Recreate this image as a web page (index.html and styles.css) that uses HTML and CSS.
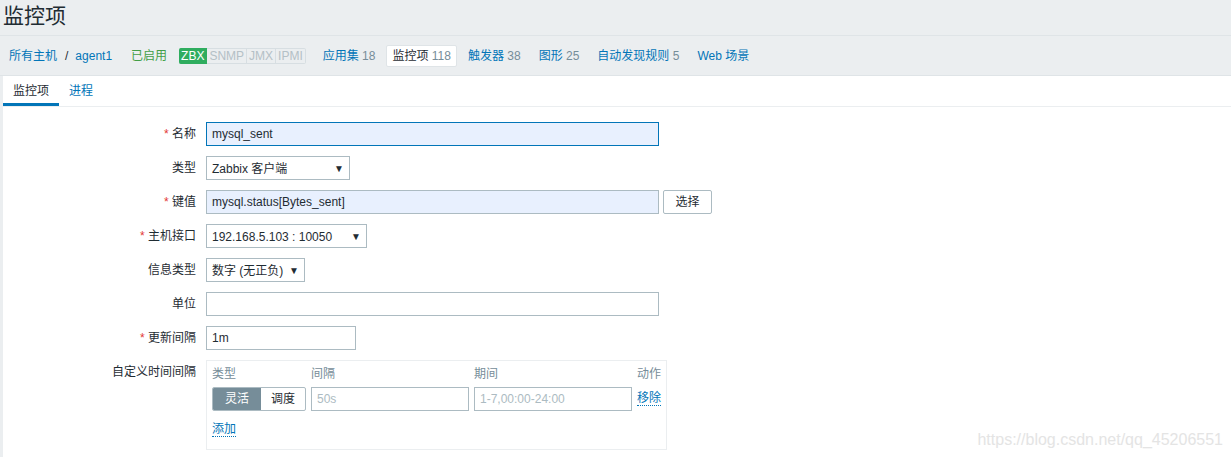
FILE: index.html
```html
<!DOCTYPE html>
<html lang="zh">
<head>
<meta charset="utf-8">
<title>监控项</title>
<link rel="stylesheet" href="styles.css">
</head>
<body>
<header class="page-header">
  <h1 class="page-title">监控项</h1>
</header>
<nav class="host-nav">
  <a class="link crumb">所有主机</a>
  <span class="sep">/</span>
  <a class="link crumb">agent1</a>
  <span class="status-on">已启用</span>
  <span class="badges">
    <span class="badge badge-on">ZBX</span><span class="badge">SNMP</span><span class="badge">JMX</span><span class="badge">IPMI</span>
  </span>
  <a class="nav-item link">应用集 <span class="count">18</span></a>
  <span class="nav-item current">监控项 <span class="count">118</span></span>
  <a class="nav-item link">触发器 <span class="count">38</span></a>
  <a class="nav-item link">图形 <span class="count">25</span></a>
  <a class="nav-item link">自动发现规则 <span class="count">5</span></a>
  <a class="nav-item link">Web 场景</a>
</nav>
<main class="content">
  <div class="tabs">
    <span class="tab tab-active">监控项</span>
    <a class="tab link">进程</a>
  </div>
  <div class="form">
    <div class="row">
      <label class="lbl"><span class="req">*</span> 名称</label>
      <div class="field"><div class="input wide focused autofill">mysql_sent</div></div>
    </div>
    <div class="row">
      <label class="lbl">类型</label>
      <div class="field"><div class="select sel-type"><span>Zabbix 客户端</span><span class="arrow">▼</span></div></div>
    </div>
    <div class="row">
      <label class="lbl"><span class="req">*</span> 键值</label>
      <div class="field"><div class="input wide autofill">mysql.status[Bytes_sent]</div><button class="btn">选择</button></div>
    </div>
    <div class="row">
      <label class="lbl"><span class="req">*</span> 主机接口</label>
      <div class="field"><div class="select sel-iface"><span>192.168.5.103 : 10050</span><span class="arrow">▼</span></div></div>
    </div>
    <div class="row">
      <label class="lbl">信息类型</label>
      <div class="field"><div class="select sel-info"><span>数字 (无正负)</span><span class="arrow">▼</span></div></div>
    </div>
    <div class="row">
      <label class="lbl">单位</label>
      <div class="field"><div class="input wide"></div></div>
    </div>
    <div class="row">
      <label class="lbl"><span class="req">*</span> 更新间隔</label>
      <div class="field"><div class="input short">1m</div></div>
    </div>
    <div class="row">
      <label class="lbl">自定义时间间隔</label>
      <div class="field">
        <div class="interval-box">
          <div class="iv-grid">
            <span class="th">类型</span>
            <span class="th">间隔</span>
            <span class="th">期间</span>
            <span class="th">动作</span>
            <div class="toggle"><span class="tg tg-on">灵活</span><span class="tg">调度</span></div>
            <div class="input ph">50s</div>
            <div class="input ph">1-7,00:00-24:00</div>
            <a class="dlink">移除</a>
          </div>
          <a class="dlink add">添加</a>
        </div>
      </div>
    </div>
  </div>
  <div class="watermark">https://blog.csdn.net/qq_45206551</div>
</main>
</body>
</html>
```

FILE: styles.css
```css
* { box-sizing: border-box; }
html, body { margin: 0; padding: 0; }
body {
  background: #ebeef0;
  color: #1f2c33;
  font-family: "Liberation Sans", Arial, "Noto Sans CJK SC", sans-serif;
  font-size: 12px;
  line-height: 14px;
  height: 457px;
  overflow: hidden;
}
.link { color: #0275b8; text-decoration: none; }

.page-header {
  height: 36px;
  border-bottom: 1px solid #dfe4e7;
  padding: 4px 0 0 3px;
}
.page-title {
  margin: 0;
  font-size: 21px;
  line-height: 24px;
  font-weight: normal;
  color: #1f2c33;
}

.host-nav {
  height: 40px;
  display: flex;
  align-items: center;
  padding-left: 9px;
  border-bottom: 1px solid #dfe4e7;
  white-space: nowrap;
}
.sep { margin: 0 7px 0 8px; color: #1f2c33; }
.status-on { color: #429e47; margin-left: 19px; }
.badges { display: inline-flex; margin-left: 12px; margin-right: 17px; }
.badge {
  height: 16px;
  line-height: 14px;
  padding: 0 2px;
  border: 1px solid #d7dee2;
  border-left: none;
  color: #b4c0c6;
  font-size: 12px;
  background: #ebeef0;
}
.badge-on {
  background: #2fad5f;
  border-color: #2fad5f;
  color: #ffffff;
  padding: 0 2px;
  border-radius: 2px 0 0 2px;
}
.badge:last-child { border-radius: 0 2px 2px 0; }
.nav-item {
  display: inline-block;
  padding: 4px 7px;
}
.host-nav .nav-item + .nav-item { margin-left: 4px; }
.host-nav .badges + .nav-item { padding-left: 0; }
.count { color: #768d99; }
.current {
  background: #ffffff;
  border: 1px solid #dfe4e7;
  border-radius: 2px;
  height: 22px;
  line-height: 14px;
  padding: 3px 5px;
}

.content {
  position: relative;
  margin-left: 3px;
  background: #ffffff;
  height: 381px;
}
.tabs {
  height: 31px;
  display: flex;
  border-bottom: 1px solid #ebeef0;
}
.tab {
  padding: 8px 10px 0 10px;
  height: 30px;
  color: #0275b8;
}
.tab-active {
  color: #1f2c33;
  border-bottom: 3px solid #0275b8;
}

.form { padding-top: 15px; }
.row {
  display: grid;
  grid-template-columns: 193px 1fr;
  column-gap: 10px;
  margin-bottom: 10px;
}
.lbl {
  text-align: right;
  padding-top: 5px;
  line-height: 14px;
}
.req { color: #e33734; }
.field { display: flex; gap: 4px; align-items: flex-start; }

.input {
  height: 24px;
  border: 1px solid #acbbc2;
  background: #ffffff;
  padding: 4px 5px;
  line-height: 14px;
  color: #1f2c33;
  white-space: nowrap;
  overflow: hidden;
}
.wide { width: 453px; }
.short { width: 150px; }
.autofill { background: #e8f0fe; }
.focused { border-color: #0275b8; }
.ph { color: #acbbc2; }

.select {
  height: 24px;
  border: 1px solid #acbbc2;
  background: #ffffff;
  padding: 5px 5px 3px 5px;
  display: flex;
  justify-content: space-between;
  line-height: 14px;
  white-space: nowrap;
}
.arrow { font-size: 10px; color: #1f2c33; }
.sel-type { width: 144px; }
.sel-iface { width: 161px; }
.sel-info { width: 99px; }

.btn {
  height: 24px;
  width: 49px;
  border: 1px solid #acbbc2;
  background: #ffffff;
  border-radius: 2px;
  font: inherit;
  color: #1f2c33;
  padding: 0;
}

.interval-box {
  width: 461px;
  height: 90px;
  border: 1px solid #ebeef0;
  padding: 6px 5px 0 5px;
}
.iv-grid {
  display: grid;
  grid-template-columns: 94px 158px 158px auto;
  column-gap: 5px;
  row-gap: 6px;
  align-items: center;
  white-space: nowrap;
}
.iv-grid .input { width: 100%; }
.th { color: #768d99; line-height: 14px; }
.toggle {
  display: flex;
  height: 24px;
  border: 1px solid #acbbc2;
  border-radius: 2px;
  overflow: hidden;
}
.tg {
  flex: 1;
  text-align: center;
  line-height: 22px;
  color: #1f2c33;
}
.tg-on { background: #768d99; color: #ffffff; flex: 0 0 48px; }
.dlink {
  color: #0275b8;
  text-decoration: none;
  border-bottom: 1px dotted #0275b8;
  justify-self: start;
  line-height: 13px;
  white-space: nowrap;
}
.add { display: inline-block; margin-top: 12px; }

.watermark {
  position: absolute;
  right: 8px;
  bottom: 8px;
  font-size: 16px;
  line-height: 18px;
  color: #e4e4e4;
}
```
